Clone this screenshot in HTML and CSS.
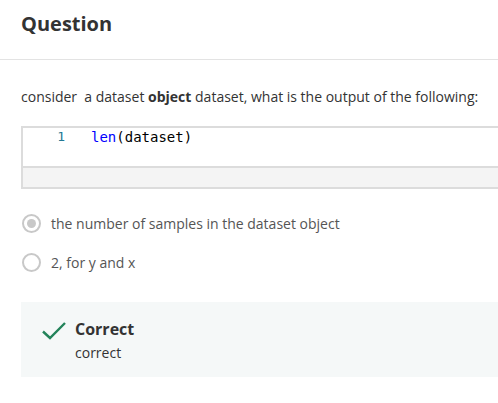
FILE: index.html
```html
<!DOCTYPE html>
<html>
<head>
<meta charset="utf-8">
<link rel="stylesheet" href="styles.css">
</head>
<body>
<div class="page">
  <header class="head"><h1 class="title">Question</h1></header>
  <div class="content">
    <p class="prompt">consider&nbsp; a dataset <b>object</b> dataset, what is the output of the following:</p>
    <div class="code">
      <div class="code-main">
        <span class="ln">1</span><span class="src"><span class="kw">len</span>(dataset)</span>
      </div>
      <div class="code-foot"></div>
    </div>
    <div class="options">
      <label class="opt"><span class="radio checked"></span><span class="opt-text">the number of samples in the dataset object</span></label>
      <label class="opt"><span class="radio"></span><span class="opt-text">2, for y and x</span></label>
    </div>
    <div class="feedback">
      <svg class="check" width="26" height="20" viewBox="0 0 26 20"><path d="M2 10.5 L9 17 L24 2" fill="none" stroke="#23835a" stroke-width="2.4"/></svg>
      <div class="fb-text">
        <div class="fb-title">Correct</div>
        <div class="fb-body">correct</div>
      </div>
    </div>
  </div>
</div>
</body>
</html>
```
FILE: styles.css
```css
html, body { margin: 0; padding: 0; background: #fff; }
body { font-family: "Open Sans", "Liberation Sans", sans-serif; color: #333; overflow: hidden; }
.page { width: 498px; overflow: hidden; }
.head { height: 60px; border-bottom: 1px solid #e3e3e3; display: flex; align-items: center; padding-left: 21px; box-sizing: border-box; }
.title { margin: 0; font-size: 20px; font-weight: 700; color: #333; position: relative; top: -6px; }
.content { padding: 0 0 0 21px; }
.prompt { margin: 27px 0 0; font-size: 14px; line-height: 20px; color: #333; }
.prompt b { font-weight: 700; }
.code { margin-top: 19px; border: 2px solid #dcdcdc; border-right: 0; box-sizing: border-box; }
.code-main { height: 38px; background: #fff; border-bottom: 2px solid #dcdcdc; display: flex; font-family: "DejaVu Sans Mono", monospace; font-size: 14px; line-height: 18px; }
.ln { width: 42px; text-align: right; color: #237893; font-size: 13px; }
.src { margin-left: 26px; color: #000; }
.kw { color: #0000ff; }
.code-foot { height: 19px; background: #f4f4f4; }
.options { margin-top: 25px; display: flex; flex-direction: column; gap: 20px; }
.opt { display: flex; align-items: center; gap: 10px; font-size: 14px; color: #555; height: 19px; }
.radio { width: 15px; height: 15px; border: 2px solid #c8c8c8; border-radius: 50%; box-sizing: content-box; display: flex; align-items: center; justify-content: center; flex: none; margin-left: 1px; }
.radio.checked::after { content: ""; width: 9px; height: 9px; border-radius: 50%; background: #c8c8c8; }
.feedback { margin-top: 30px; background: #f5f8f8; height: 75px; display: flex; align-items: flex-start; padding: 16px 0 0 20px; box-sizing: border-box; }
.check { margin-top: 3px; flex: none; }
.fb-text { margin-left: 8px; }
.fb-title { font-size: 16px; font-weight: 700; color: #333; line-height: 22px; }
.fb-body { font-size: 14px; color: #333; line-height: 22px; margin-top: 2px; }
```
